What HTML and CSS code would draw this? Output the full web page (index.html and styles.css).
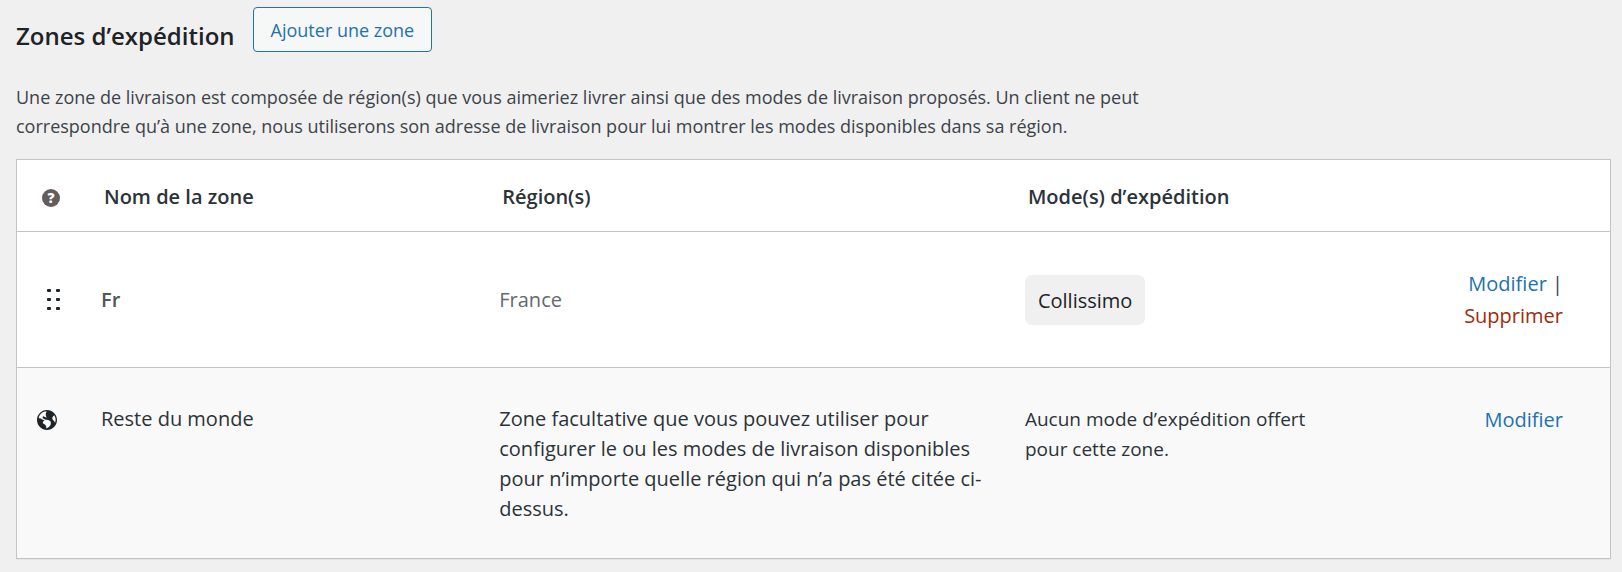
FILE: index.html
```html
<!DOCTYPE html>
<html lang="fr">
<head>
  <meta charset="UTF-8">
  <meta name="viewport" content="width=device-width, initial-scale=1.0">
  <title>Zones d’expédition</title>
  <link rel="stylesheet" href="styles.css">
</head>
<body>
  <main class="shipping">
    <div class="shipping-header">
      <h2>Zones d’expédition</h2>
      <button type="button" class="add-button">Ajouter une zone</button>
    </div>
    <p class="shipping-intro">Une zone de livraison est composée de région(s) que vous aimeriez livrer ainsi que des modes de livraison proposés. Un client ne peut correspondre qu’à une zone, nous utiliserons son adresse de livraison pour lui montrer les modes disponibles dans sa région.</p>

    <table class="zones">
      <colgroup>
        <col class="col-sort">
        <col class="col-name">
        <col class="col-region">
        <col class="col-methods">
        <col class="col-actions">
      </colgroup>
      <thead>
        <tr>
          <th class="sort"><span class="help-tip">?</span></th>
          <th>Nom de la zone</th>
          <th>Région(s)</th>
          <th>Mode(s) d’expédition</th>
          <th></th>
        </tr>
      </thead>
      <tbody>
        <tr>
          <td class="sort">
            <!-- Drag handle -->
            <svg class="handle" width="14" height="24" viewBox="0 0 14 24" fill="#1d2327" aria-hidden="true">
              <rect x="0" y="1" width="4" height="3" rx="1"/>
              <rect x="9" y="1" width="4" height="3" rx="1"/>
              <rect x="0" y="10" width="4" height="3" rx="1"/>
              <rect x="9" y="10" width="4" height="3" rx="1"/>
              <rect x="0" y="19" width="4" height="3" rx="1"/>
              <rect x="9" y="19" width="4" height="3" rx="1"/>
            </svg>
          </td>
          <td class="zone-name">Fr</td>
          <td class="zone-region">France</td>
          <td><span class="method">Collissimo</span></td>
          <td class="actions"><a href="#">Modifier</a> |<br><a href="#" class="delete">Supprimer</a></td>
        </tr>
        <tr class="worldwide">
          <td class="sort">
            <svg class="globe" width="20" height="20" viewBox="0 0 18 18" fill="#1d2327" aria-hidden="true">
              <path d="M9 0C4.03 0 0 4.03 0 9s4.03 9 9 9 9-4.03 9-9-4.03-9-9-9zm3.46 11.95c0 1.47-.8 3.3-4.06 4.7.3-4.17-2.52-3.69-3.2-5 .126-1.1.804-2.063 1.8-2.55-1.552-.266-3-.96-4.18-2 .05.47.28.904.64 1.21-.782-.295-1.458-.817-1.94-1.5.977-3.225 3.883-5.482 7.25-5.63-.84 1.38-1.5 4.13 0 5.57C7.23 7 6.26 5 5.41 5.79c-1.13 1.06.33 2.51 3.42 3.08 3.29.59 3.66 1.58 3.63 3.08zm1.34-4c-.32-1.11.62-2.23 1.69-3.14 1.356 1.955 1.67 4.45.84 6.68-.77-1.89-2.17-2.32-2.53-3.57v.03z"/>
            </svg>
          </td>
          <td>Reste du monde</td>
          <td>Zone facultative que vous pouvez utiliser pour configurer le ou les modes de livraison disponibles pour n’importe quelle région qui n’a pas été citée ci-dessus.</td>
          <td class="no-method">Aucun mode d’expédition offert pour cette zone.</td>
          <td class="actions"><a href="#">Modifier</a></td>
        </tr>
      </tbody>
    </table>
  </main>
</body>
</html>
```
FILE: styles.css
```css
body {
  margin: 0;
  background-color: #f0f0f0;
  color: #3c434a;
  font-family: "Open Sans", "Noto Sans", sans-serif;
  font-size: 18px;
  line-height: 30px;
}

.shipping {
  padding: 7px 11px 14px 16px;
}

.shipping-header {
  display: flex;
  align-items: flex-start;
  gap: 18px;
}

.shipping-header h2 {
  margin: 14px 0 0;
  color: #1d2327;
  font-size: 24px;
  font-weight: 600;
}

.add-button {
  height: 45px;
  padding: 0 17px;
  border: 1px solid #2271b1;
  border-radius: 4px;
  background-color: #f6f7f7;
  color: #2271b1;
  font-family: inherit;
  font-size: 18px;
  cursor: pointer;
}

.shipping-intro {
  max-width: 1170px;
  margin: 31px 0 18px;
  line-height: 29px;
}

.zones {
  width: 100%;
  table-layout: fixed;
  border-collapse: separate;
  border-spacing: 0;
  border: 1px solid #c3c4c7;
  background-color: #ffffff;
  box-shadow: 0 1px 1px rgba(0, 0, 0, 0.04);
  font-size: 20px;
}

.col-sort {
  width: 54px;
}

.col-name {
  width: 25%;
}

.col-region {
  width: 33%;
}

.col-methods {
  width: 22%;
}

.zones th {
  height: 72px;
  padding: 2px 8px 0 33px;
  border-bottom: 1px solid #c3c4c7;
  box-sizing: border-box;
  color: #2c3338;
  font-weight: 600;
  text-align: left;
}

.zones td {
  padding: 36px 8px 35px 30px;
  vertical-align: middle;
}

.zones .sort {
  padding-left: 20px;
  padding-right: 0;
}

.zones th.sort {
  padding-top: 4px;
  padding-left: 25px;
}

.help-tip {
  display: block;
  width: 18px;
  height: 18px;
  border-radius: 50%;
  background-color: #655c5e;
  color: #ffffff;
  font-size: 14px;
  font-weight: 800;
  line-height: 18px;
  text-align: center;
}

.handle {
  display: block;
  margin-left: 10px;
}

.globe {
  display: block;
  margin-top: 6px;
}

.zone-name {
  color: #50575e;
  font-weight: 600;
}

.zone-region {
  color: #646970;
}

.method {
  display: inline-block;
  padding: 11px 13px 9px;
  border-radius: 7px;
  background-color: #f0f0f0;
  color: #1d2327;
  vertical-align: top;
}

.zones .actions {
  padding-right: 47px;
  line-height: 32px;
  text-align: right;
}

.actions a {
  color: #2271b1;
  text-decoration: none;
}

.actions .delete {
  color: #a02b0b;
}

.zones .worldwide td {
  padding-bottom: 34px;
  border-top: 1px solid #c3c4c7;
  background-color: #f9f9f9;
  color: #2c3338;
  vertical-align: top;
}

.zones .no-method {
  font-size: 19px;
}
```
